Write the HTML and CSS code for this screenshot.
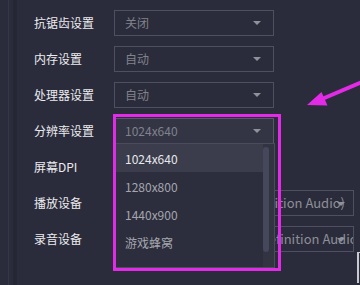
FILE: index.html
```html
<!DOCTYPE html>
<html>
<head>
<meta charset="utf-8">
<link rel="stylesheet" href="styles.css">
</head>
<body>
<div class="page">
  <div class="rail"></div>
  <div class="form">
    <div class="row"><span class="label">抗锯齿设置</span><div class="select"><span class="val">关闭</span><i class="caret"></i></div></div>
    <div class="row"><span class="label">内存设置</span><div class="select"><span class="val">自动</span><i class="caret"></i></div></div>
    <div class="row"><span class="label">处理器设置</span><div class="select"><span class="val">自动</span><i class="caret"></i></div></div>
    <div class="row"><span class="label">分辨率设置</span><div class="select open"><span class="val">1024x640</span><i class="caret"></i></div></div>
    <div class="row"><span class="label">屏幕DPI</span><div class="select"><span class="val"></span><i class="caret"></i></div></div>
    <div class="row"><span class="label">播放设备</span><div class="select wide"><span class="val end">扬声器 (High Definition Audio)</span><i class="caret"></i></div></div>
    <div class="row"><span class="label">录音设备</span><div class="select wide"><span class="val end clip">麦克风 (High Definition Audio)</span><i class="caret"></i></div></div>
  </div>

  <div class="dropdown">
    <div class="options">
      <div class="opt active">1024x640</div>
      <div class="opt">1280x800</div>
      <div class="opt">1440x900</div>
      <div class="opt">游戏蜂窝</div>
    </div>
    <div class="scroll"><div class="thumb"></div></div>
  </div>

  <div class="highlight"></div>
  <div class="edge"></div>

  <svg class="arrow" width="60" height="30" viewBox="300 80 60 30">
    <line x1="322" y1="99" x2="362" y2="82" stroke="#e22be6" stroke-width="4"/>
    <polygon points="307,105 321.5,92 327.5,105.5" fill="#e22be6"/>
  </svg>
</div>
</body>
</html>
```

FILE: styles.css
```css
html, body {
  margin: 0;
  padding: 0;
}
body {
  background: #2b2c3b;
  width: 360px;
  height: 285px;
  overflow: hidden;
  font-family: "Noto Sans CJK SC", "Noto Sans", sans-serif;
  font-size: 12px;
}
.page {
  position: relative;
  width: 360px;
  height: 285px;
  display: flex;
}
.rail {
  width: 4px;
  margin-left: 8px;
  border-left: 1px solid #34364a;
  box-shadow: 4px 0 0 #262735;
  flex: none;
}
.form {
  padding-top: 10px;
  padding-left: 21px;
  display: flex;
  flex-direction: column;
  gap: 10px;
}
.row {
  display: flex;
  align-items: center;
  height: 26px;
}
.label {
  width: 80px;
  color: #ebebef;
  flex: none;
  line-height: 16px;
}
.select {
  width: 160px;
  height: 26px;
  box-sizing: border-box;
  border: 1px solid #4e5062;
  display: flex;
  align-items: center;
  padding-left: 10px;
  padding-right: 12px;
  color: #80828c;
  overflow: hidden;
  position: relative;
}
.select.open {
  background: #333545;
  border-color: #575969;
}
.select.wide {
  width: 240px;
  color: #8d8f98;
  font-size: 13px;
}
.val {
  flex: 1;
  white-space: nowrap;
  line-height: 16px;
}
.val.end {
  display: flex;
  justify-content: flex-end;
  overflow: hidden;
  margin-right: -4px;
}
.val.clip {
  margin-right: -21px;
}
.caret {
  flex: none;
  width: 0;
  height: 0;
  border-left: 4px solid transparent;
  border-right: 4px solid transparent;
  border-top: 4px solid #8f919b;
  margin-left: 6px;
}
.wide .caret {
  position: absolute;
  right: 8px;
  top: 11px;
}
.dropdown {
  position: absolute;
  left: 115px;
  top: 143px;
  width: 160px;
  height: 125px;
  box-sizing: border-box;
  border: 1px solid #4a4c5d;
  background: #2d2e3d;
  display: flex;
}
.options {
  flex: 1;
}
.opt {
  height: 28px;
  display: flex;
  align-items: center;
  padding-left: 9px;
  color: #a4a6ae;
}
.opt.active {
  background: #3b3d4c;
  color: #e8e8ec;
}
.scroll {
  width: 11px;
  background: #323442;
  flex: none;
  padding: 3px 0 0 0;
  box-sizing: border-box;
}
.thumb {
  width: 6px;
  height: 105px;
  border-radius: 3px;
  background: #45475a;
}
.highlight {
  position: absolute;
  left: 113px;
  top: 114px;
  width: 168px;
  height: 157px;
  box-sizing: border-box;
  border: 3px solid #e22be6;
}
.edge {
  position: absolute;
  left: 357px;
  top: 252px;
  width: 3px;
  height: 31px;
  box-sizing: border-box;
  border-left: 2px solid #c9cad0;
  border-top: 1px solid #c9cad0;
}
.arrow {
  position: absolute;
  left: 300px;
  top: 80px;
}
```
